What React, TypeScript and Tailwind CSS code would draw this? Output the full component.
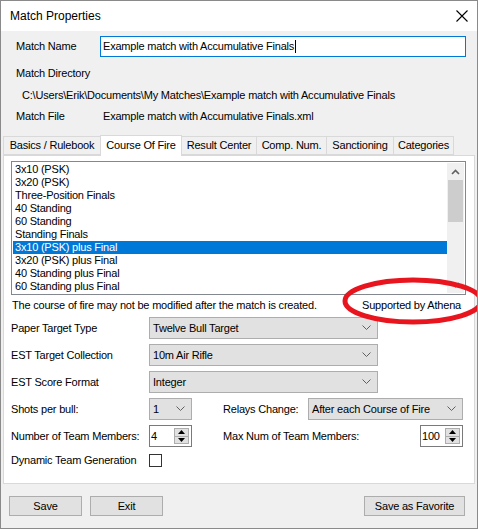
import React from 'react';

const font = { fontFamily: '"Liberation Sans", Arial, sans-serif' };

const courses = [
  '3x10 (PSK)',
  '3x20 (PSK)',
  'Three-Position Finals',
  '40 Standing',
  '60 Standing',
  'Standing Finals',
  '3x10 (PSK) plus Final',
  '3x20 (PSK) plus Final',
  '40 Standing plus Final',
  '60 Standing plus Final',
];

const tabs: [string, string][] = [
  ['Basics / Rulebook', 'w-[98px]'],
  ['Course Of Fire', 'w-[82px]'],
  ['Result Center', 'w-[76px]'],
  ['Comp. Num.', 'w-[71px]'],
  ['Sanctioning', 'w-[68px]'],
  ['Categories', 'w-[61px]'],
];

const Chevron = () => (
  <svg width="9" height="6" viewBox="0 0 9 6" className="shrink-0">
    <path d="M0.5 0.5 L4.5 4.5 L8.5 0.5" fill="none" stroke="#606060" strokeWidth="1" />
  </svg>
);

const Select = ({ value, className }: { value: string; className: string }) => (
  <div className={`flex h-[22px] items-center justify-between border border-[#adadad] bg-[#e1e1e1] pl-[3px] pr-[6px] ${className}`}>
    <span>{value}</span>
    <Chevron />
  </div>
);

const Spinner = ({ value, className }: { value: string; className: string }) => (
  <div className={`flex h-[22px] items-center justify-between border border-[#7a7a7a] bg-white pl-[1px] pr-[2px] ${className}`}>
    <span>{value}</span>
    <div className="flex h-[16px] w-[15px] flex-col border border-[#adadad] bg-[#e1e1e1]">
      <div className="flex flex-1 items-center justify-center border-b border-[#adadad]">
        <svg width="7" height="4" viewBox="0 0 7 4"><path d="M0 4 L3.5 0 L7 4 Z" fill="#000" /></svg>
      </div>
      <div className="flex flex-1 items-center justify-center">
        <svg width="7" height="4" viewBox="0 0 7 4"><path d="M0 0 L3.5 4 L7 0 Z" fill="#000" /></svg>
      </div>
    </div>
  </div>
);

const Button = ({ label, className }: { label: string; className: string }) => (
  <div className={`flex h-[20px] items-center justify-center border border-[#adadad] bg-[#e1e1e1] ${className}`}>
    {label}
  </div>
);

export default function App() {
  return (
    <div
      className="relative flex h-[529px] w-[478px] flex-col overflow-hidden border border-[#8a8a8a] bg-[#f0f0f0] text-[11px] leading-[13px] tracking-[-0.2px] text-black"
      style={font}
    >
      {/* Title bar */}
      <div className="flex h-[30px] shrink-0 items-center justify-between bg-white pl-[9px] pr-[9px] tracking-normal">
        <span className="text-[12px]">Match Properties</span>
        <svg width="12" height="12" viewBox="0 0 12 12">
          <path d="M0.5 0.5 L11.5 11.5 M11.5 0.5 L0.5 11.5" stroke="#000" strokeWidth="1.1" />
        </svg>
      </div>

      {/* Match header fields */}
      <div className="flex flex-col pl-[15px]">
        <div className="mt-[5px] flex h-[21px] items-center">
          <span className="w-[84px]">Match Name</span>
          <div className="flex h-[21px] w-[366px] items-center border border-[#0078d7] bg-white pl-[2px]">
            Example match with Accumulative Finals
            <span className="ml-[1px] h-[13px] w-[1px] bg-black" />
          </div>
        </div>
        <div className="flex h-[20px] items-center pt-[12px]">Match Directory</div>
        <div className="mt-[8px] flex h-[20px] items-center pl-[6px]">
          C:\Users\Erik\Documents\My Matches\Example match with Accumulative Finals
        </div>
        <div className="mt-[1px] flex h-[21px] items-center">
          <span className="w-[87px]">Match File</span>
          <span>Example match with Accumulative Finals.xml</span>
        </div>
      </div>

      {/* Tabs */}
      <div className="mt-[8px] flex h-[20px] items-end pl-[2px]">
        {tabs.map(([t, w], i) =>
          i === 1 ? (
            <div
              key={t}
              className={`relative z-10 -mb-[1px] -ml-[1px] flex h-[21px] items-start justify-center border border-b-0 border-[#d9d9d9] bg-white pt-[3px] ${w}`}
            >
              {t}
            </div>
          ) : (
            <div
              key={t}
              className={`flex h-[19px] items-center justify-center border border-[#d9d9d9] bg-[#f0f0f0] ${w} ${i === 0 ? '' : '-ml-[1px]'}`}
            >
              {t}
            </div>
          )
        )}
      </div>

      {/* Tab panel */}
      <div className="ml-[2px] flex h-[329px] w-[472px] flex-col border border-[#d9d9d9] bg-white px-[7px] pt-[5px]">
        {/* Course list */}
        <div className="flex h-[134px] w-[455px] border border-[#828790] bg-white p-[1px]">
          <div className="flex flex-1 flex-col overflow-hidden">
            {courses.map((c, i) => (
              <div
                key={c}
                className={`h-[13px] shrink-0 pl-[2px] ${i === 6 ? 'bg-[#0078d7] text-white' : ''}`}
              >
                {c}
              </div>
            ))}
          </div>
          <div className="flex w-[17px] flex-col bg-[#f0f0f0]">
            <div className="flex h-[17px] items-center justify-center">
              <svg width="9" height="6" viewBox="0 0 9 6"><path d="M1 5 L4.5 1.5 L8 5" fill="none" stroke="#606060" strokeWidth="1.6" /></svg>
            </div>
            <div className="mx-[1px] h-[42px] bg-[#cdcdcd]" />
            <div className="flex-1" />
            <div className="flex h-[17px] items-center justify-center">
              <svg width="9" height="6" viewBox="0 0 9 6"><path d="M1 1 L4.5 4.5 L8 1" fill="none" stroke="#606060" strokeWidth="1.6" /></svg>
            </div>
          </div>
        </div>

        <div className="mt-[4px] flex h-[13px] items-center justify-between pl-[1px] pr-[6px]">
          <span>The course of fire may not be modified after the match is created.</span>
          <span>Supported by Athena</span>
        </div>

        {/* Target settings */}
        <div className="mt-[5px] flex flex-col gap-[5px]">
          {[
            ['Paper Target Type', 'Twelve Bull Target'],
            ['EST Target Collection', '10m Air Rifle'],
            ['EST Score Format', 'Integer'],
          ].map(([label, value]) => (
            <div key={label} className="flex items-center">
              <span className="w-[138px]">{label}</span>
              <Select value={value} className="w-[229px]" />
            </div>
          ))}

          <div className="flex items-center">
            <span className="w-[138px]">Shots per bull:</span>
            <Select value="1" className="w-[43px]" />
            <span className="ml-[31px] w-[85px]">Relays Change:</span>
            <Select value="After each Course of Fire" className="w-[155px]" />
          </div>

          <div className="flex items-center">
            <span className="w-[138px]">Number of Team Members:</span>
            <Spinner value="4" className="w-[43px]" />
            <span className="ml-[31px] w-[197px]">Max Num of Team Members:</span>
            <Spinner value="100" className="w-[43px]" />
          </div>

          <div className="mt-[2px] flex items-center">
            <span className="w-[138px]">Dynamic Team Generation</span>
            <div className="h-[13px] w-[13px] border border-[#333] bg-white" />
          </div>
        </div>
      </div>

      {/* Buttons */}
      <div className="mt-[12px] flex items-center pl-[8px] pr-[12px]">
        <Button label="Save" className="w-[73px]" />
        <Button label="Exit" className="ml-[8px] w-[73px]" />
        <div className="flex-1" />
        <Button label="Save as Favorite" className="w-[101px]" />
      </div>

      {/* Red highlight ellipse */}
      <svg className="pointer-events-none absolute left-0 top-0" width="478" height="529">
        <ellipse cx="412" cy="300" rx="68" ry="21" fill="none" stroke="#e8151f" strokeWidth="5" />
      </svg>
    </div>
  );
}
